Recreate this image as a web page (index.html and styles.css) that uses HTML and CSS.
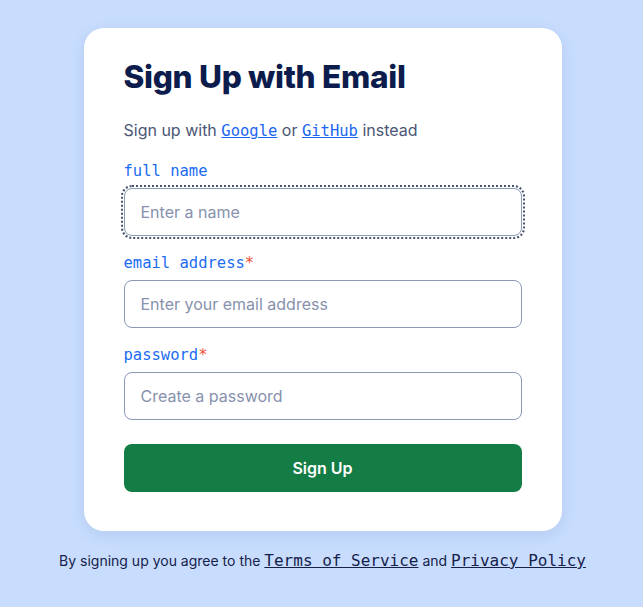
FILE: index.html
```html
<!DOCTYPE html>
<html>
<head>
  <title>Sign Up</title>
  <link rel="stylesheet" href="styles.css">
</head>
<body>
  <main class="page">
    <form class="card">
      <h1 class="title">Sign Up with Email</h1>
      <p class="alt">Sign up with <a href="#">Google</a> or <a href="#">GitHub</a> instead</p>
      <label class="field">
        <span class="label">full name</span>
        <input class="input focused" placeholder="Enter a name">
      </label>
      <label class="field">
        <span class="label">email address<b class="req">*</b></span>
        <input class="input" placeholder="Enter your email address">
      </label>
      <label class="field">
        <span class="label">password<b class="req">*</b></span>
        <input class="input" type="password" placeholder="Create a password">
      </label>
      <button class="submit" type="button">Sign Up</button>
    </form>
    <p class="terms">By signing up you agree to the <a href="#">Terms of Service</a> and <a href="#">Privacy Policy</a></p>
  </main>
</body>
</html>
```
FILE: styles.css
```css
html, body { margin: 0; height: 100%; }
body { background: #c8ddfe; font-family: Inter, "Noto Sans", sans-serif; }
.page { display: flex; flex-direction: column; align-items: center; padding: 28px 0 0 2px; }
.card { width: 478px; box-sizing: border-box; background: #fff; border-radius: 20px; padding: 30px 40px 39px; box-shadow: 0 4px 16px rgba(40, 70, 140, 0.12); display: flex; flex-direction: column; }
.title { margin: 0; font-size: 31.6px; font-weight: 800; color: #0c1c4c; letter-spacing: -0.3px; line-height: 38px; }
.alt { margin: 24px 0 21px; font-size: 16px; color: #4b5675; line-height: 20px; }
.alt a { font-family: "DejaVu Sans Mono", monospace; font-size: 15.5px; color: #1b66f0; }
.field { display: flex; flex-direction: column; margin-bottom: 18px; }
.label { font-family: "DejaVu Sans Mono", monospace; font-size: 15.5px; color: #1b6cf2; line-height: 18px; margin-bottom: 8px; }
.req { color: #f0503c; font-weight: normal; }
.input { height: 48px; box-sizing: border-box; border: 1px solid #8a99b4; border-radius: 8px; padding: 0 16px; font-family: Inter, sans-serif; font-size: 16px; color: #1a2340; }
.input::placeholder { color: #8791ad; }
.focused { outline: 2px dotted #4a5470; outline-offset: 1px; }
.submit { margin-top: 6px; height: 48px; border: none; border-radius: 8px; background: #147d45; color: #fff; font-family: Inter, sans-serif; font-size: 16px; font-weight: 600; }
.terms { margin: 20px 0 0; font-size: 14px; color: #16214a; }
.terms a { font-family: "DejaVu Sans Mono", monospace; font-size: 16px; color: #16214a; }
```
